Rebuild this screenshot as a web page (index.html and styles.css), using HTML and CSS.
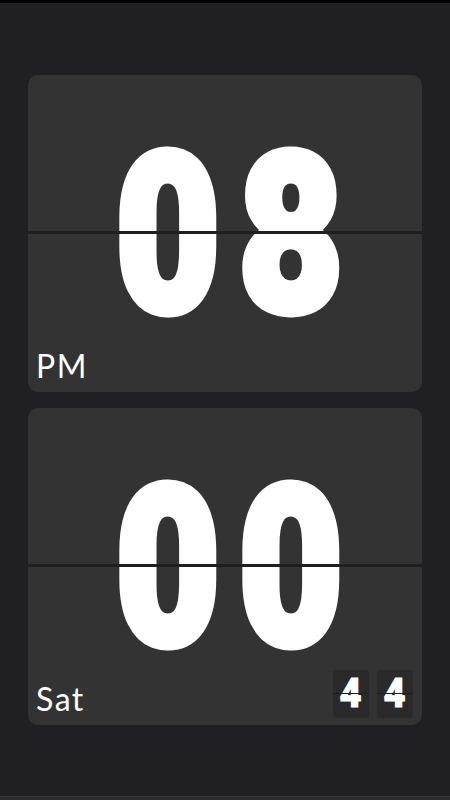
FILE: index.html
```html
<!DOCTYPE html>
<html lang="en">
<head>
<meta charset="utf-8">
<title>Flip Clock</title>
<link rel="stylesheet" href="styles.css">
</head>
<body>
<div class="screen">
  <div class="status-bar"></div>
  <main class="clock">
    <section class="card">
      <div class="digits">
        <div class="digit"><span>0</span></div>
        <div class="digit"><span>8</span></div>
      </div>
      <div class="card-footer">
        <span class="label">PM</span>
      </div>
    </section>
    <section class="card">
      <div class="digits">
        <div class="digit"><span>0</span></div>
        <div class="digit"><span>0</span></div>
      </div>
      <div class="card-footer">
        <span class="label">Sat</span>
        <div class="seconds">
          <div class="sec-digit"><span>4</span></div>
          <div class="sec-digit"><span>4</span></div>
        </div>
      </div>
    </section>
  </main>
  <div class="bottom-edge"></div>
</div>
</body>
</html>
```
FILE: styles.css
```css
html, body {
  margin: 0;
  padding: 0;
  background: #202022;
}

.screen {
  width: 450px;
  height: 800px;
  display: flex;
  flex-direction: column;
  overflow: hidden;
}

.status-bar {
  height: 3px;
  background: #000000;
  flex: none;
}

.clock {
  flex: 1;
  display: flex;
  flex-direction: column;
  gap: 16px;
  padding: 72px 28px 0 28px;
}

.card {
  position: relative;
  height: 317px;
  background: #333333;
  border-radius: 10px;
  display: grid;
  grid-template: 1fr / 1fr;
  overflow: hidden;
}

.card::after {
  content: "";
  position: absolute;
  left: 0;
  right: 0;
  top: 156px;
  height: 3px;
  background: #1f1f21;
}

.digits {
  grid-area: 1 / 1;
  align-self: center;
  display: flex;
  justify-content: center;
  align-items: center;
  gap: 23px;
  padding-left: 8px;
  padding-top: 6px;
}

.digit {
  width: 100px;
  height: 176px;
  display: flex;
  justify-content: center;
  align-items: center;
}

.digit span {
  font-family: "Roboto", sans-serif;
  font-weight: 900;
  font-size: 220px;
  line-height: 0.78;
  color: #ffffff;
  -webkit-text-stroke: 9px #ffffff;
  transform: scaleX(0.82);
  white-space: nowrap;
}

.card-footer {
  grid-area: 1 / 1;
  align-self: end;
  display: flex;
  justify-content: space-between;
  align-items: flex-end;
  padding: 0 9px 7px 8px;
}

.label {
  font-family: "Lato", "Noto Sans", sans-serif;
  font-size: 32px;
  font-weight: 400;
  letter-spacing: 1.5px;
  color: #ffffff;
  line-height: 1;
  padding-bottom: 3px;
}

.seconds {
  display: flex;
  gap: 8px;
}

.sec-digit {
  position: relative;
  width: 36px;
  height: 48px;
  background: #2a2a2a;
  border-radius: 3px;
  display: flex;
  justify-content: center;
  align-items: center;
  overflow: hidden;
}

.sec-digit::after {
  content: "";
  position: absolute;
  left: 0;
  right: 0;
  top: 23px;
  height: 1px;
  background: #1e1e1e;
}

.sec-digit span {
  font-family: "Roboto", sans-serif;
  font-weight: 900;
  font-size: 40px;
  line-height: 1;
  color: #ffffff;
  -webkit-text-stroke: 1px #ffffff;
  transform: scaleX(0.95);
}

.bottom-edge {
  height: 3px;
  background: #2a2a2c;
  border-top: 1px solid #3a3a3c;
  flex: none;
}
```
